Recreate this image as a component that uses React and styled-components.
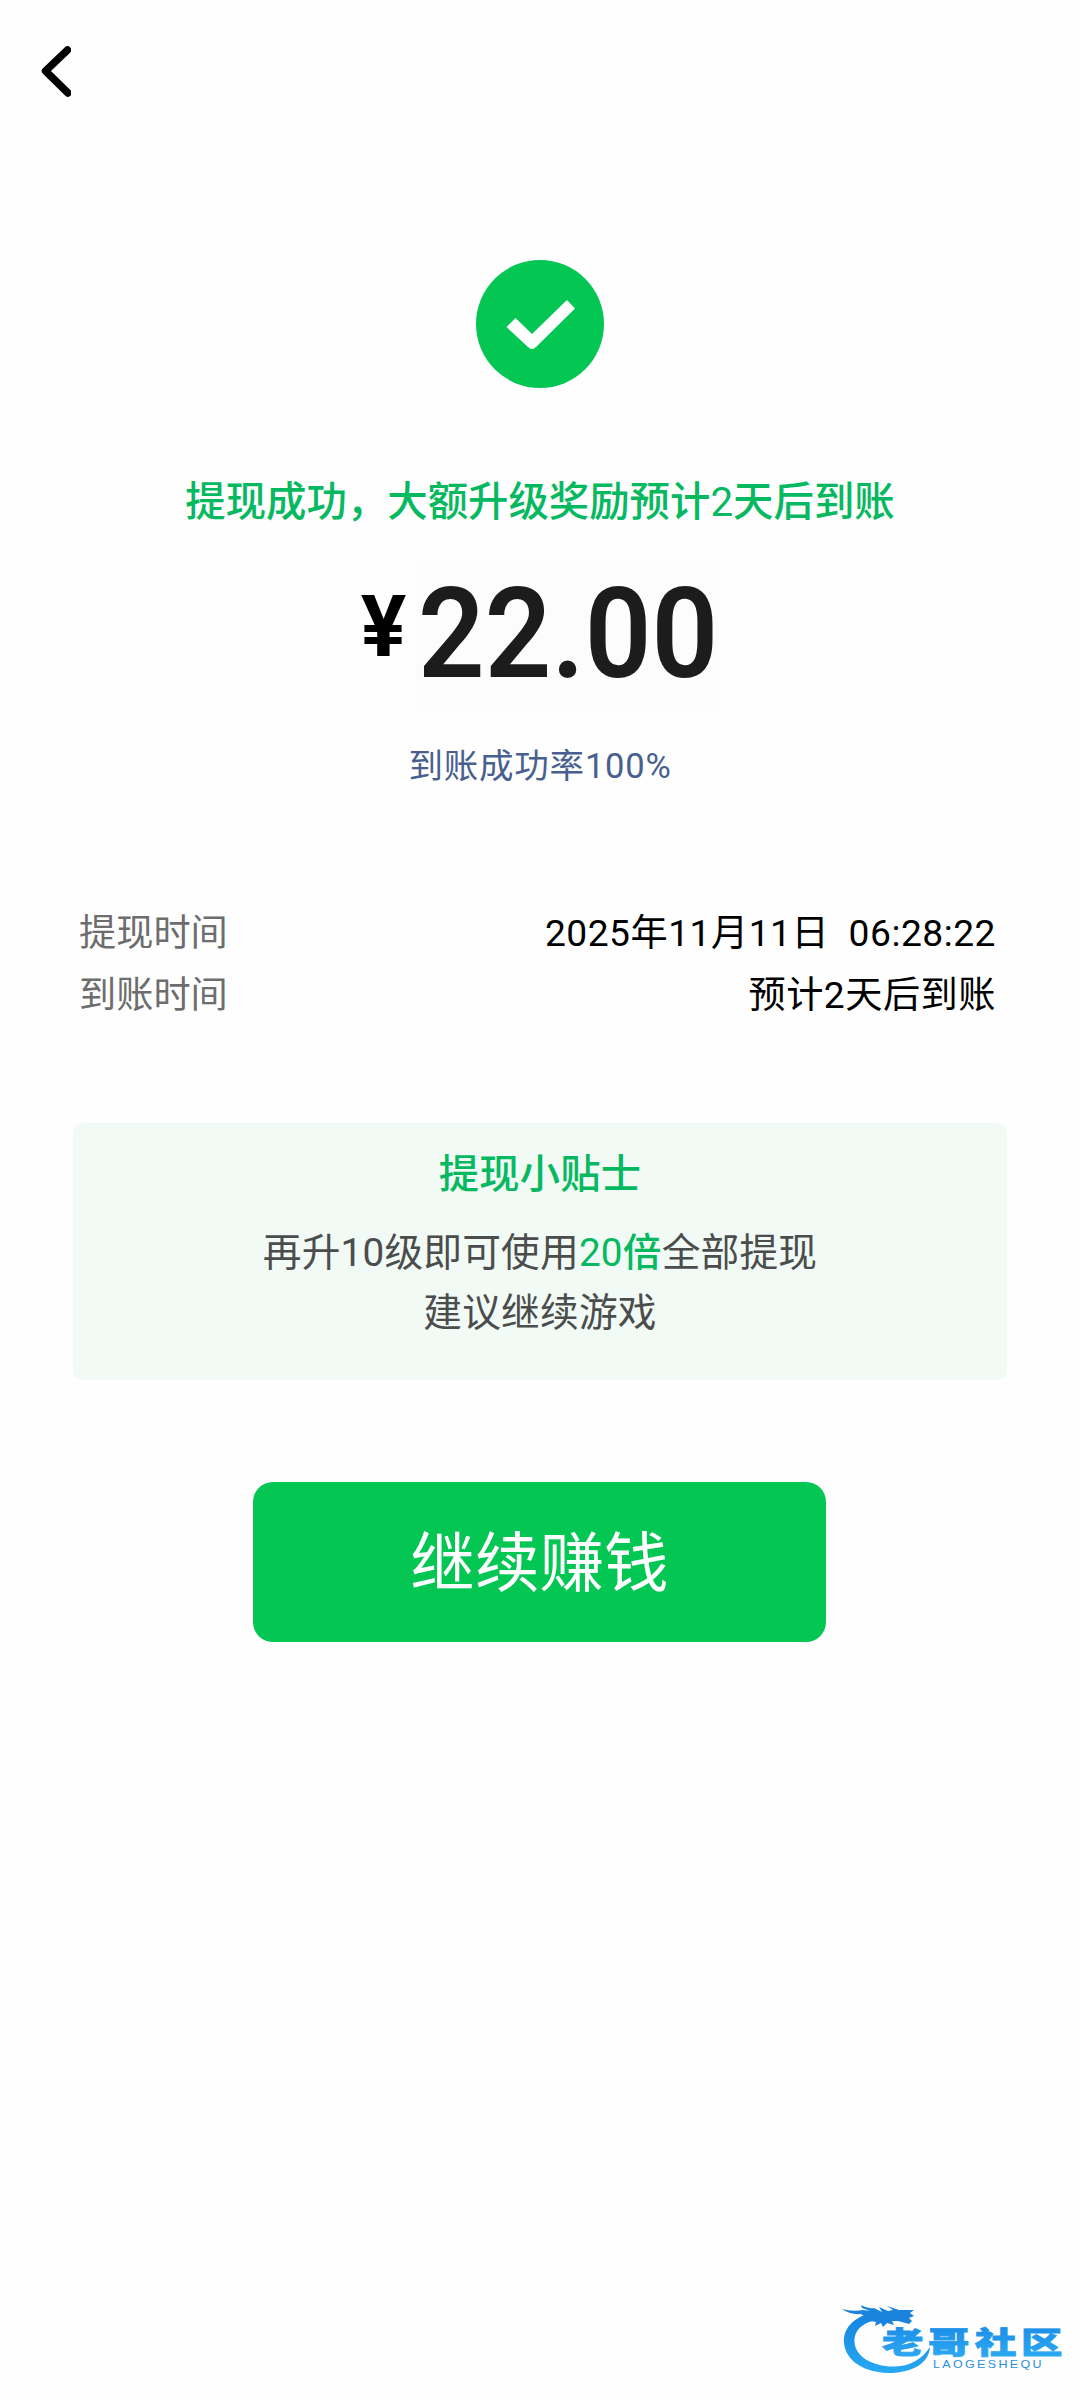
import React from "react";

import styled, { createGlobalStyle } from "styled-components";

const rows = [
  { label: "提现时间", value: "2025年11月11日  06:28:22" },
  { label: "到账时间", value: "预计2天后到账" },
];

function Result() {
  return (
    <ResultWrapper>
      <svg width="128" height="128" viewBox="0 0 128 128">
        <circle cx="64" cy="64" r="64" fill="#03c653" />
        <path
          d="M30.5 67 L39.5 58 L56 74 L91 40 L99 48.5 L60 87 Q56 91 52 87 Z"
          fill="#fff"
        />
      </svg>
      <Title>
        提现成功，大额升级奖励预计<Num>2</Num>天后到账
      </Title>
      <Amount>
        <Currency>¥</Currency>
        <Price>
          <span>22.00</span>
        </Price>
      </Amount>
      <Rate>到账成功率100%</Rate>
    </ResultWrapper>
  );
}

function Watermark() {
  return (
    <WatermarkWrapper>
      <svg width="250" height="110" viewBox="0 0 250 110">
        <defs>
          <linearGradient id="ring" x1="0" y1="0" x2="0" y2="1">
            <stop offset="0" stopColor="#1583e0" />
            <stop offset="1" stopColor="#27a9f3" />
          </linearGradient>
          <linearGradient id="word" x1="0" y1="0" x2="0" y2="1">
            <stop offset="0" stopColor="#1787e4" />
            <stop offset="1" stopColor="#2fabf3" />
          </linearGradient>
        </defs>
        <path
          d="M37 24 C20 30 13 41 14 53 C16 72 36 83.5 62 83 C83 82 99 73 100 57 C92 69 81 76 65 76.5 C42 77 25 66 24.5 52 C24 40 33 32 48 30 Z"
          fill="url(#ring)"
        />
        <path
          d="M12 19 Q22 22 33 20 L40 21 L32 18 L31 15 Q37 19 44 18 L52 22 L49 17 L58 21 L63 20 L57 16 L69 20 L74 20 L84 20 L80 23 L84 26 L79 28 L82 31 L79 34 L68 31 L62 31 L64 35 L57 33 L53 37 L51 33 L45 36 L46 32 L36 30 L34 26 L31 24 Q20 25 12 19 Z"
          fill="#1a84dc"
        />
        {["老", "哥", "社", "区"].map((char, i) => (
          <LogoText
            key={char}
            transform={`translate(${[52, 98, 145, 191][i]} 62.5) scale(1.38 1)`}
            fill="url(#word)"
            stroke="url(#word)"
          >
            {char}
          </LogoText>
        ))}
        <LogoCaption
          x="103"
          y="77.5"
          textLength="111"
          lengthAdjust="spacingAndGlyphs"
        >
          LAOGESHEQU
        </LogoCaption>
      </svg>
    </WatermarkWrapper>
  );
}

function App() {
  return (
    <>
      <GlobalStyle />
      <Page>
        <Header>
          <Back aria-label="返回">
            <svg width="30" height="52" viewBox="0 0 30 52">
              <path
                d="M26.5 4 L4.5 25 L27 47"
                fill="none"
                stroke="#000"
                strokeWidth="7.5"
                strokeLinecap="round"
                strokeLinejoin="round"
              />
            </svg>
          </Back>
        </Header>
        <Result />
        <Details>
          {rows.map((row) => (
            <Row key={row.label}>
              <dt>{row.label}</dt>
              <dd>{row.value}</dd>
            </Row>
          ))}
        </Details>
        <Tips>
          <header>提现小贴士</header>
          <p>
            再升10级即可使用
            <em>
              <Num>20</Num>倍
            </em>
            全部提现
          </p>
          <p>建议继续游戏</p>
        </Tips>
        <Button>继续赚钱</Button>
        <Watermark />
      </Page>
    </>
  );
}

const GlobalStyle = createGlobalStyle`
  * {
    box-sizing: border-box;
    margin: 0;
    padding: 0;
  }
  body {
    background: #fefefe;
    font-family: Roboto, "Noto Sans CJK SC", sans-serif;
  }
  button {
    border: none;
    background: none;
    font-family: inherit;
  }
`;

const Page = styled.div`
  display: flex;
  flex-direction: column;
  align-items: center;
  width: 1080px;
  height: 2400px;
  overflow: hidden;
`;

const Header = styled.header`
  width: 100%;
  height: 260px;
  padding: 46px 0 0 41px;
`;

const Back = styled.button`
  display: block;
  svg {
    display: block;
  }
`;

const Num = styled.span`
  font-weight: 400;
`;

const ResultWrapper = styled.section`
  display: flex;
  flex-direction: column;
  align-items: center;
  > svg {
    display: block;
  }
`;

const Title = styled.h1`
  height: 60px;
  margin-top: 85px;
  line-height: 60px;
  font-size: 40.4px;
  font-weight: 500;
  color: #06b961;
  white-space: nowrap;
`;

const Amount = styled.div`
  display: flex;
  align-items: flex-start;
  gap: 10px;
  height: 151px;
  margin-top: 27px;
`;

const Currency = styled.span`
  margin-top: 17px;
  line-height: 100px;
  font-size: 85px;
  font-weight: 700;
  color: #000;
`;

const Price = styled.strong`
  display: flex;
  justify-content: center;
  width: 303px;
  height: 151px;
  background: #fcfcfc;
  line-height: 147px;
  font-size: 127px;
  font-weight: 600;
  color: #1c1c1c;
  span {
    transform: scaleX(0.92);
  }
`;

const Rate = styled.p`
  margin-top: 30px;
  line-height: 50px;
  font-size: 34.5px;
  letter-spacing: 0.8px;
  color: #48608f;
`;

const Details = styled.dl`
  width: 100%;
  margin-top: 111px;
  padding: 0 84px 0 79px;
`;

const Row = styled.div`
  display: flex;
  justify-content: space-between;
  height: 62.3px;
  line-height: 63px;
  font-size: 37.2px;
  white-space: pre;
  dt {
    color: #6d6d6d;
  }
  dd {
    letter-spacing: 0.5px;
    color: #000;
  }
`;

const Tips = styled.section`
  width: 934px;
  height: 257px;
  margin-top: 96px;
  padding-top: 22px;
  border-radius: 10px;
  background: #f1faf5;
  text-align: center;
  line-height: 60px;
  font-size: 38.7px;
  letter-spacing: 0.2px;
  color: #4b4d4c;
  header {
    margin-bottom: 18px;
    font-size: 40.3px;
    font-weight: 500;
    color: #06b961;
  }
  em {
    font-style: normal;
    font-weight: 500;
    color: #06b961;
  }
`;

const Button = styled.button`
  width: 573px;
  height: 160px;
  margin: 102px 1px 0 0;
  padding-top: 4px;
  border-radius: 20px;
  background: #03c653;
  line-height: 156px;
  font-size: 64.6px;
  color: #fff;
`;

const WatermarkWrapper = styled.footer`
  align-self: flex-end;
  margin-top: auto;
  svg {
    display: block;
  }
`;

const LogoText = styled.text`
  font-family: "Noto Sans CJK SC", sans-serif;
  font-size: 30px;
  font-weight: 900;
  stroke-width: 0.8px;
`;

const LogoCaption = styled.text`
  font-family: "Liberation Sans", sans-serif;
  font-size: 10.5px;
  letter-spacing: 2px;
  fill: #2b8fdc;
`;

export default App;
